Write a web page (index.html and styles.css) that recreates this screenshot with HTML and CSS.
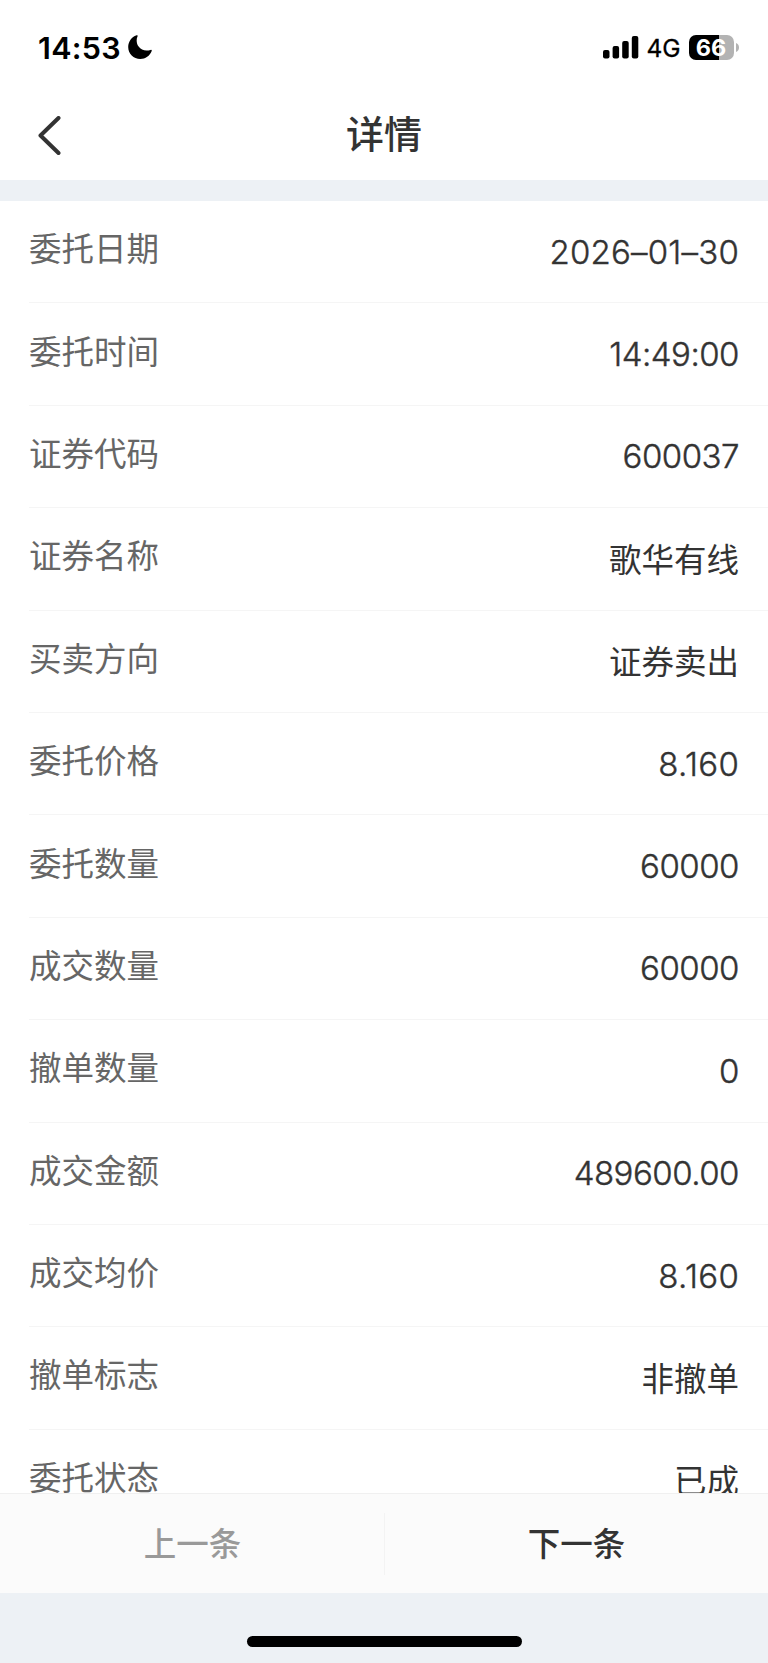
FILE: index.html
```html
<!DOCTYPE html>
<html lang="zh-CN">
  <head>
    <meta charset="UTF-8" />
    <title>详情</title>
    <link rel="stylesheet" href="styles.css">
  </head>
  <body>
    <div class="status-bar">
      <div class="status-left">
        <span class="time">14:53</span>
        <svg class="moon" width="24" height="24" viewBox="0 0 24 24">
          <path d="M8.6 0.3 C9.4 -0.1 10 0.4 9.5 1.4 C8.2 4 8.3 8.5 10.6 11.6 C13.4 15.5 18 16.4 22.6 14.9 C23.5 14.6 24 15.1 23.7 15.9 C21.8 20.8 17.4 23.9 12.3 23.9 C5.5 23.9 0.2 18.7 0.2 12 C0.2 6.8 3.5 2.1 8.6 0.3 Z" />
        </svg>
      </div>
      <div class="status-right">
        <svg class="signal" width="36" height="23" viewBox="0 0 36 23">
          <rect x="0" y="14" width="6.5" height="8.5" rx="2" />
          <rect x="9.6" y="10" width="6.5" height="12.5" rx="2" />
          <rect x="19.2" y="5" width="6.5" height="17.5" rx="2" />
          <rect x="28.8" y="0" width="6.5" height="22.5" rx="2" />
        </svg>
        <span class="network">4G</span>
        <div class="battery">66</div>
        <svg class="battery-cap" width="3" height="9" viewBox="0 0 3 9">
          <path d="M0 0 Q3 1.2 3 4.5 Q3 7.8 0 9 Z" />
        </svg>
      </div>
    </div>

    <div class="nav-bar">
      <svg class="back" width="24" height="40" viewBox="0 0 24 40">
        <path d="M20.5 2 L2.5 19.5 L20.5 37" />
      </svg>
      <h1>详情</h1>
    </div>

    <div class="detail-list">
      <div class="row"><span class="label">委托日期</span><span class="value number date">2026–01–30</span></div>
      <div class="row"><span class="label">委托时间</span><span class="value number">14:49:00</span></div>
      <div class="row"><span class="label">证券代码</span><span class="value number">600037</span></div>
      <div class="row"><span class="label">证券名称</span><span class="value">歌华有线</span></div>
      <div class="row"><span class="label">买卖方向</span><span class="value">证券卖出</span></div>
      <div class="row"><span class="label">委托价格</span><span class="value number price">8.160</span></div>
      <div class="row"><span class="label">委托数量</span><span class="value number">60000</span></div>
      <div class="row"><span class="label">成交数量</span><span class="value number">60000</span></div>
      <div class="row"><span class="label">撤单数量</span><span class="value number">0</span></div>
      <div class="row"><span class="label">成交金额</span><span class="value number">489600.00</span></div>
      <div class="row"><span class="label">成交均价</span><span class="value number price">8.160</span></div>
      <div class="row"><span class="label">撤单标志</span><span class="value">非撤单</span></div>
      <div class="row"><span class="label">委托状态</span><span class="value">已成</span></div>
    </div>

    <div class="pager">
      <div class="pager-button disabled">上一条</div>
      <div class="pager-divider"></div>
      <div class="pager-button">下一条</div>
    </div>

    <div class="home-area">
      <div class="home-indicator"></div>
    </div>
  </body>
</html>
```
FILE: styles.css
```css
* {
  box-sizing: border-box;
}
body {
  margin: 0;
  height: 1663px;
  display: flex;
  flex-direction: column;
  overflow: hidden;
  background-color: #fff;
  color: #333;
  font-family: Inter, "Noto Sans CJK SC", sans-serif;
}
.status-bar {
  height: 94px;
  flex: none;
  display: flex;
  justify-content: space-between;
  padding: 0 29.5px 0 38px;
  color: #000;
}
.status-left,
.status-right {
  display: flex;
  align-items: center;
  height: 94px;
}
.time {
  font-size: 30.5px;
  font-weight: 600;
  letter-spacing: 0.3px;
  width: 90px;
}
.signal {
  margin-right: 8px;
}
.network {
  width: 42px;
  padding-top: 2px;
  font-size: 24.5px;
  font-weight: 400;
  -webkit-text-stroke: 0.3px #000;
}
.battery {
  width: 45px;
  height: 25px;
  border-radius: 7px;
  background: linear-gradient(to right, #000 30px, #b3b3b3 30px);
  color: #fff;
  font-size: 23.5px;
  font-weight: 700;
  line-height: 25px;
  text-align: center;
}
.battery-cap {
  margin-left: 2px;
  fill: #b3b3b3;
}
.nav-bar {
  height: 86px;
  flex: none;
  display: grid;
  grid-template-columns: 1fr auto 1fr;
  align-items: center;
  padding: 0 38px 4px;
}
.back {
  margin-top: 2px;
  fill: none;
  stroke: #333;
  stroke-width: 4;
  stroke-linecap: round;
  stroke-linejoin: round;
}
.nav-bar h1 {
  margin: 0 0 2px;
  font-size: 38px;
  font-weight: 500;
  line-height: 50px;
}
.detail-list {
  flex: 1;
  min-height: 0;
  overflow: hidden;
  border-top: 21px solid #edf1f5;
}
.row {
  height: 102.4px;
  margin-left: 29px;
  padding-right: 29px;
  display: flex;
  justify-content: space-between;
  align-items: center;
  border-bottom: 1px solid #f5f5f5;
  font-size: 32.5px;
  line-height: 48px;
}
.label {
  color: #666;
  padding-bottom: 3px;
}
.value {
  padding-top: 4px;
}
.number {
  padding-top: 0;
  font-size: 33px;
  font-weight: 300;
  -webkit-text-stroke: 0.4px #333;
  letter-spacing: -0.5px;
}
.date {
  letter-spacing: 0.2px;
}
.price {
  letter-spacing: 0.4px;
  margin-right: -0.4px;
}
.pager {
  height: 100px;
  flex: none;
  display: flex;
  align-items: center;
  border-top: 1px solid #f0f0f0;
  background-color: #fbfbfb;
}
.pager-button {
  flex: 1;
  padding-top: 2px;
  text-align: center;
  font-size: 32.5px;
  font-weight: 500;
  line-height: 48px;
}
.pager-button.disabled {
  color: #999;
  padding-left: 1px;
}
.pager-divider {
  width: 1px;
  height: 62px;
  background-color: #f3f3f3;
}
.home-area {
  height: 70px;
  flex: none;
  display: flex;
  justify-content: center;
  align-items: flex-end;
  padding-bottom: 16px;
  background-color: #edf1f5;
}
.home-indicator {
  width: 275px;
  height: 11px;
  border-radius: 6px;
  background-color: #000;
}
```
